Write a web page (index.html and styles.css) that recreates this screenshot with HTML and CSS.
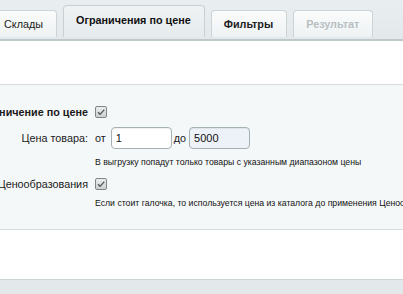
FILE: index.html
```html
<!DOCTYPE html>
<html lang="ru">
<head>
<meta charset="utf-8">
<link rel="stylesheet" href="styles.css">
</head>
<body>
<div class="tabs-bar">
  <div class="tabs">
    <div class="tab tab-first">Склады</div>
    <div class="tab tab-active">Ограничения по цене</div>
    <div class="tab tab-bold">Фильтры</div>
    <div class="tab tab-bold tab-disabled">Результат</div>
  </div>
</div>
<div class="white-gap"></div>
<div class="form">
  <div class="field field-first">
    <div class="label label-bold">Ограничение по цене</div>
    <div class="control"><span class="checkbox"><svg viewBox="0 0 12 12" width="12" height="12"><path d="M3 6.3 L5.1 8.4 L9.3 3.6" fill="none" stroke="#4d5356" stroke-width="1.3"/></svg></span></div>
  </div>
  <div class="field field-price">
    <div class="label">Цена товара:</div>
    <div class="control"><span class="word word-from">от</span><input class="input" type="text" value="1"><span class="word word-to">до</span><input class="input input-alt" type="text" value="5000"></div>
    <div class="hint hint-price">В выгрузку попадут только товары с указанным диапазоном цены</div>
  </div>
  <div class="field field-third">
    <div class="label">Ценообразования</div>
    <div class="control"><span class="checkbox"><svg viewBox="0 0 12 12" width="12" height="12"><path d="M3 6.3 L5.1 8.4 L9.3 3.6" fill="none" stroke="#4d5356" stroke-width="1.3"/></svg></span></div>
    <div class="hint hint-catalog">Если стоит галочка, то используется цена из каталога до применения Ценообразования</div>
  </div>
</div>
<div class="white-bottom"></div>
<div class="footer-bar"></div>
</body>
</html>
```
FILE: styles.css
```css
html, body {
  margin: 0;
  padding: 0;
}
body {
  width: 403px;
  height: 294px;
  overflow: hidden;
  font-family: "Liberation Sans", Arial, sans-serif;
  color: #1a1a1a;
  background: #fff;
}
.tabs-bar {
  height: 41px;
  box-sizing: border-box;
  padding-top: 5px;
  background: linear-gradient(#e9eef0, #e3e9eb);
  border-bottom: 2px solid #bfc9cc;
}
.tabs {
  display: flex;
  align-items: flex-end;
  gap: 6px;
  height: 32px;
}
.tab {
  height: 27px;
  box-sizing: border-box;
  padding: 0 13px 0 12px;
  display: flex;
  align-items: center;
  font-size: 10.8px;
  white-space: nowrap;
  border: 1px solid #ccd4d6;
  border-bottom: none;
  border-radius: 4px 4px 0 0;
  background: linear-gradient(#fbfcfc, #eef2f3);
  color: #222;
}
.tab-first {
  margin-left: -9px;
}
.tab-active {
  height: 32px;
  font-weight: bold;
  background: linear-gradient(#eef2f3, #e6ecee);
  border-color: #c8d0d3;
  color: #111;
  padding-bottom: 3px;
}
.tab-bold {
  font-weight: bold;
}
.tab-disabled {
  color: #b7bfc2;
}
.white-gap {
  height: 43px;
  border-bottom: 1px solid #d5dcdf;
}
.form {
  background: #f5f8f9;
  padding: 17px 0 20px;
  border-bottom: 1px solid #d5dcdf;
}
.field {
  display: grid;
  grid-template-columns: 88px 1fr;
  column-gap: 7px;
  align-items: center;
}
.field-price {
  margin-top: 5px;
}
.field-third {
  margin-top: 6px;
}
.label {
  display: flex;
  justify-content: flex-end;
  white-space: nowrap;
  font-size: 10.8px;
  line-height: 20px;
}
.label-bold {
  font-weight: bold;
}
.control {
  display: flex;
  align-items: center;
  min-height: 20px;
  font-size: 10.8px;
  white-space: nowrap;
}
.checkbox {
  display: block;
  width: 12px;
  height: 12px;
  box-sizing: border-box;
  border: 1px solid #7f878a;
  border-radius: 2px;
  background: linear-gradient(#eceeee, #cdd1d2);
  overflow: hidden;
}
.checkbox svg {
  display: block;
  margin: -1px;
}
.word-from {
  margin-right: 5px;
}
.word-to {
  margin: 0 3px 0 2px;
}
.input {
  width: 61px;
  height: 22px;
  box-sizing: border-box;
  border: 1px solid #a6b1b6;
  border-radius: 4px;
  padding: 0 4px;
  margin: 0;
  font-family: "Liberation Sans", Arial, sans-serif;
  font-size: 11px;
  color: #111;
  background: #fff;
  box-shadow: inset 0 1px 1px rgba(0,0,0,0.06);
}
.input-alt {
  background: #edf2f9;
}
.hint {
  grid-column: 2;
  font-size: 8.7px;
  line-height: 12px;
  white-space: nowrap;
  color: #111;
}
.hint-price {
  margin-top: 7px;
}
.hint-catalog {
  margin-top: 3px;
}
.white-bottom {
  height: 49px;
}
.footer-bar {
  height: 14px;
  border-top: 1px solid #ccd4d7;
  background: #e3e9eb;
}
```
